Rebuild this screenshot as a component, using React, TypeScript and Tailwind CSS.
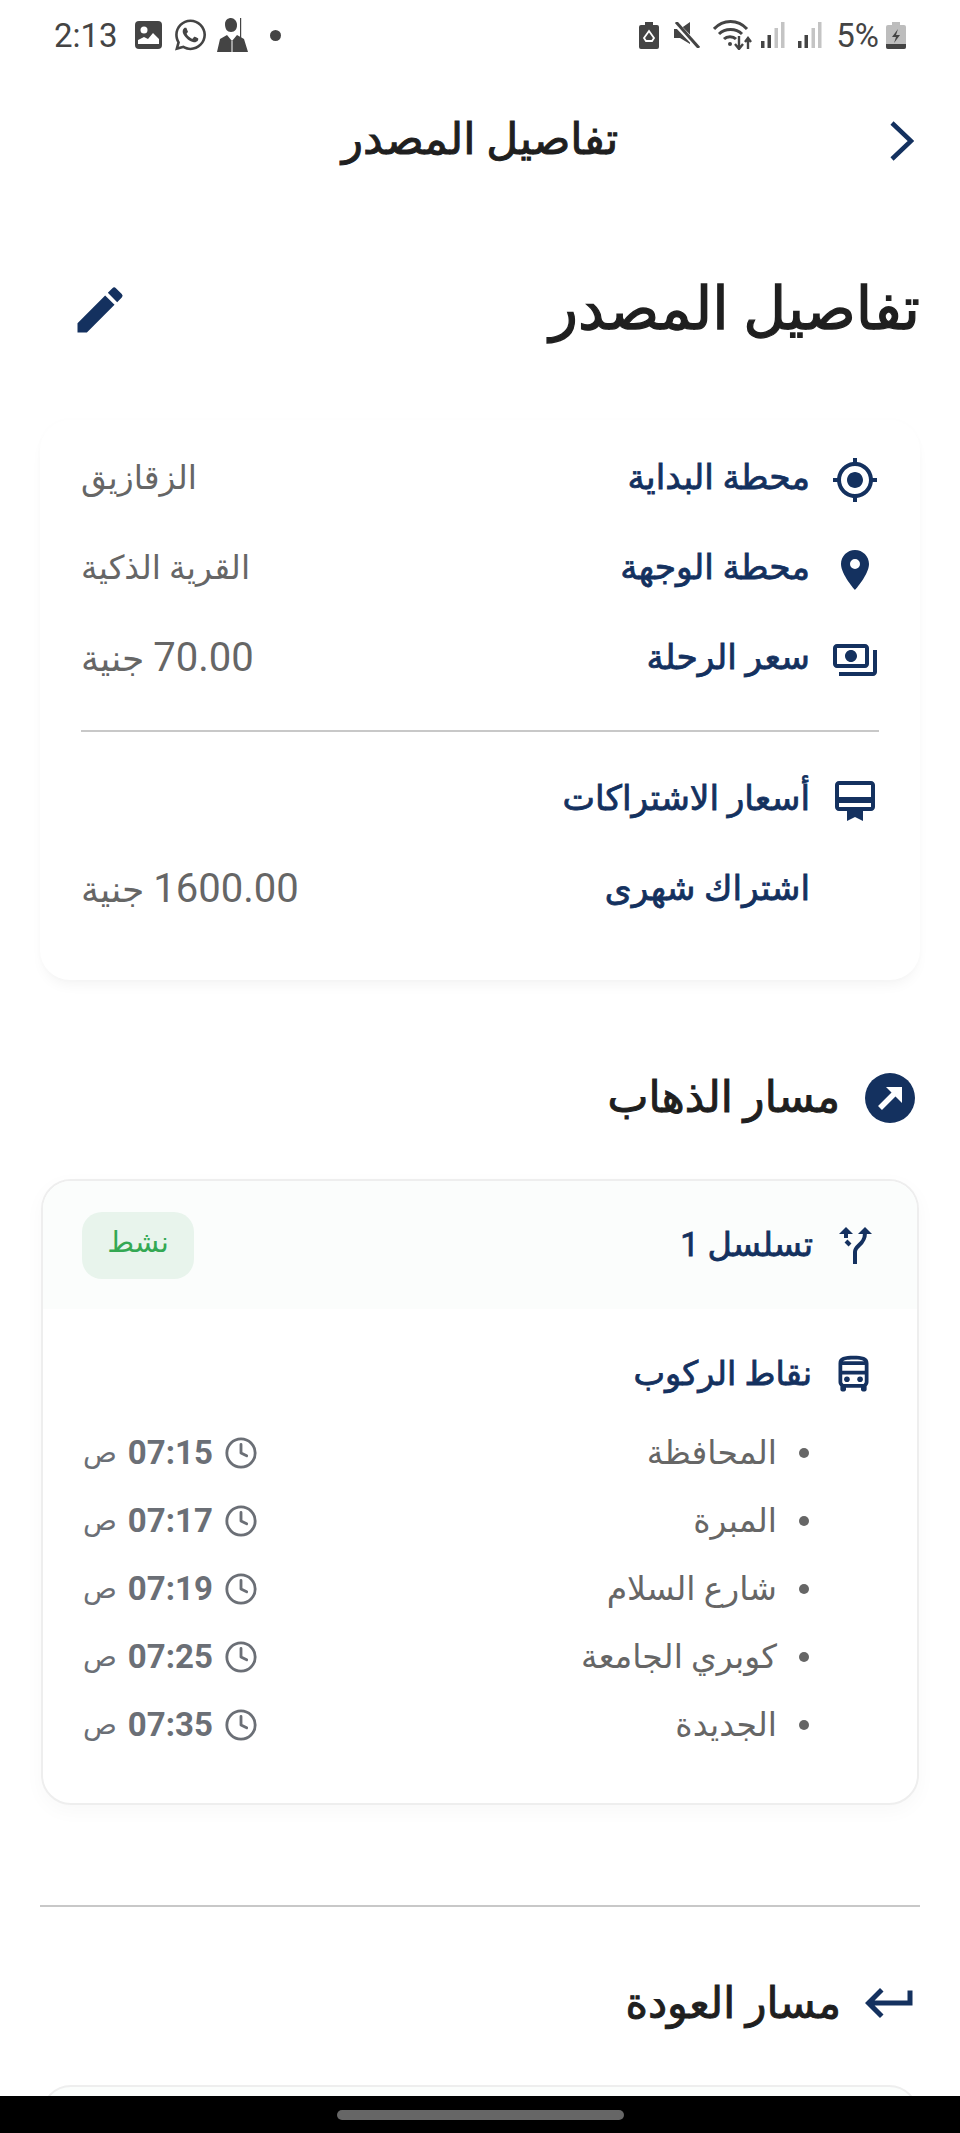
import React from "react";
import { Clock } from "lucide-react";
import { FaWhatsapp } from "react-icons/fa";
import {
  MdCardMembership,
  MdEdit,
  MdGpsFixed,
  MdKeyboardReturn,
  MdLocationOn,
  MdOutlineDirectionsBus,
  MdOutlinePayments,
} from "react-icons/md";

const stops = [
  { name: "المحافظة", time: "07:15" },
  { name: "المبرة", time: "07:17" },
  { name: "شارع السلام", time: "07:19" },
  { name: "كوبري الجامعة", time: "07:25" },
  { name: "الجديدة", time: "07:35" },
];

const BatteryShape = ({ fill }: { fill: string }) => (
  <path d="M6 0h8v3h4a2 2 0 0 1 2 2v20a2 2 0 0 1-2 2H2a2 2 0 0 1-2-2V5a2 2 0 0 1 2-2h4z" fill={fill} />
);

const Signal = () => (
  <svg width="24" height="26" viewBox="0 0 24 26">
    <rect x="0" y="19" width="3.5" height="7" fill="#444" />
    <rect x="6.5" y="13" width="3.5" height="13" fill="#444" />
    <rect x="13.5" y="6" width="3.5" height="20" fill="#c4c4c4" />
    <rect x="20" y="0" width="3.5" height="26" fill="#c4c4c4" />
  </svg>
);

const Money = ({ amount }: { amount: string }) => (
  <span className="text-[36px]">
    <span className="text-[40px] tracking-[1px]">{amount}</span> جنية
  </span>
);

const InfoRow = ({ icon, label, value }: { icon?: React.ReactNode; label: string; value?: React.ReactNode }) => (
  <div className="flex h-[90px] items-center justify-between">
    <div className="flex items-center gap-[21px]">
      <div className="flex w-[48px] justify-center">{icon}</div>
      <span className="mb-[4px] text-[34.5px] text-[#14315f] [-webkit-text-stroke:0.8px_#14315f]">{label}</span>
    </div>
    <span className="mb-[4px] text-[33px] text-[#666]">{value}</span>
  </div>
);

export default function App() {
  return (
    <div
      dir="rtl"
      className="relative flex h-[2133px] w-[960px] flex-col overflow-hidden bg-white font-['Roboto','DejaVu_Sans',sans-serif]"
    >
      {/* status bar */}
      <div dir="ltr" className="flex h-[70px] shrink-0 items-center justify-between pl-[54px] pr-[54px] text-[#444]">
        <div className="flex items-center">
          <span className="text-[33px] leading-none">2:13</span>
          <svg className="ml-[17px]" width="27" height="28" viewBox="0 0 27 28">
            <rect width="27" height="28" rx="4" fill="#444" />
            <circle cx="9" cy="9" r="3.5" fill="#fff" />
            <path d="M3 23v-4l6-3 4 2 5-6 6 6v5z" fill="#fff" />
          </svg>
          <FaWhatsapp className="ml-[13px] h-[36px] w-[31px]" />
          <svg className="ml-[11px]" width="31" height="34" viewBox="0 0 31 34" fill="#444">
            <path d="M8 6c0-4 3-6 6-6s6 3 6 7-2 7-6 7-6-3-6-8z" />
            <path d="M0 34l3-13 7-4 5 6 5-6 7 4 4 13z" />
            <rect x="23" y="0" width="1.2" height="20" />
            <path d="M15 23v11" stroke="#fff" strokeWidth="1" />
          </svg>
          <span className="ml-[22px] h-[11px] w-[11px] rounded-full bg-[#444]" />
        </div>
        <div className="flex items-center">
          <svg width="20" height="27" viewBox="0 0 20 27">
            <BatteryShape fill="#444" />
            <path d="M10 9l5 7-2 3H7l-2-3z" fill="none" stroke="#fff" strokeWidth="1.8" />
          </svg>
          <svg className="ml-[15px]" width="26" height="26" viewBox="0 0 26 26" fill="#444">
            <path d="M0 7h6l10-7v22l-10-6H0z" />
            <path d="M0 0l25 26" stroke="#fff" strokeWidth="5.5" />
            <path d="M2 0l23 26" stroke="#444" strokeWidth="3" />
          </svg>
          <svg className="ml-[13px]" width="39" height="30" viewBox="0 0 39 30" fill="none" stroke="#444">
            <path d="M1 9c9-10 24-10 33 0M6 14c6-6 17-6 23 0M11 19c3-3 9-3 12 0" strokeWidth="3" />
            <circle cx="17" cy="24" r="2" fill="#444" stroke="none" />
            <path d="M26 16v12M22 24l4 5 4-5M35 29V18M32 22l3-4 3 4" strokeWidth="2.4" />
          </svg>
          <div className="ml-[9px]"><Signal /></div>
          <div className="ml-[13px]"><Signal /></div>
          <span className="ml-[14px] text-[33px] leading-none">5%</span>
          <svg className="ml-[7px]" width="20" height="27" viewBox="0 0 20 27">
            <BatteryShape fill="#bdbdbd" />
            <path d="M0 22h20v3a2 2 0 0 1-2 2H2a2 2 0 0 1-2-2z" fill="#444" />
            <path d="M12 7l-6 8h4l-2 6 6-8h-4z" fill="#444" />
          </svg>
        </div>
      </div>

      {/* app bar */}
      <div className="grid h-[142px] shrink-0 grid-cols-[1fr_auto_1fr] items-center px-[46px]">
        <svg width="24" height="40" viewBox="0 0 24 40" fill="none" stroke="#14315f" strokeWidth="4.5">
          <path d="M2 2l19 18L2 38" />
        </svg>
        <h2 className="mb-[4px] text-[44px] leading-none text-[#1f1f1f] [-webkit-text-stroke:1px_#1f1f1f]">تفاصيل المصدر</h2>
        <div />
      </div>

      {/* page title */}
      <div className="mt-[54px] flex h-[88px] shrink-0 items-center justify-between pl-[70px] pr-[40px]">
        <h1 className="mb-[4px] text-[59px] leading-none text-[#1f1f1f] [-webkit-text-stroke:1.3px_#1f1f1f]">تفاصيل المصدر</h1>
        <MdEdit className="h-[60px] w-[60px] text-[#14315f]" />
      </div>

      {/* source card */}
      <div className="mx-[40px] mt-[66px] h-[560px] shrink-0 rounded-[30px] bg-white px-[41px] pt-[15px] shadow-[0_8px_14px_-4px_rgba(0,0,0,0.05),0_0_6px_rgba(0,0,0,0.015)]">
        <InfoRow icon={<MdGpsFixed className="h-[48px] w-[48px] text-[#14315f]" />} label="محطة البداية" value="الزقازيق" />
        <InfoRow icon={<MdLocationOn className="h-[48px] w-[48px] text-[#14315f]" />} label="محطة الوجهة" value="القرية الذكية" />
        <InfoRow icon={<MdOutlinePayments className="h-[48px] w-[48px] text-[#14315f]" />} label="سعر الرحلة" value={<Money amount="70.00" />} />
        <div className="mt-[25px] h-[2px] bg-[#c8c8c8]" />
        <div className="mt-[24px]">
          <InfoRow icon={<MdCardMembership className="h-[48px] w-[48px] text-[#14315f]" />} label="أسعار الاشتراكات" />
        </div>
        <InfoRow label="اشتراك شهرى" value={<Money amount="1600.00" />} />
      </div>

      {/* outbound */}
      <div className="mt-[88px] flex shrink-0 items-center gap-[25px] pr-[45px]">
        <div className="flex h-[50px] w-[50px] items-center justify-center rounded-full bg-[#14315f]">
          <svg width="50" height="50" viewBox="0 0 50 50" fill="#fff">
            <path d="M15 35l17-17" stroke="#fff" strokeWidth="5.5" />
            <path d="M21 14h16v16z" />
          </svg>
        </div>
        <h3 className="text-[43.5px] leading-[60px] text-[#1f1f1f] [-webkit-text-stroke:1px_#1f1f1f]">مسار الذهاب</h3>
      </div>

      <div className="mx-[41px] mt-[51px] h-[626px] shrink-0 overflow-hidden rounded-[30px] border-2 border-[#eeeeee] bg-white shadow-[0_6px_20px_rgba(0,0,0,0.03)]">
        <div className="flex h-[128px] items-center justify-between bg-[#fbfdfc] pl-[39px] pr-[45px]">
          <div className="flex items-center gap-[26px]">
            <svg width="33" height="37" viewBox="0 0 33 37" fill="#14315f">
              <path d="M16 37V25C16 18 26 18 26 6" fill="none" stroke="#14315f" strokeWidth="4" />
              <path d="M26 0l7 7H19z" />
              <path d="M7 0l7 7H0z" />
              <rect x="5" y="7" width="4" height="4" />
              <path d="M7 14l4 4" stroke="#14315f" strokeWidth="4" />
            </svg>
            <span className="text-[33.5px] text-[#14315f] [-webkit-text-stroke:0.8px_#14315f]">تسلسل 1</span>
          </div>
          <span className="flex h-[67px] w-[112px] items-center justify-center rounded-[20px] bg-[#e8f4ec] pb-[4px] text-[29px] text-[#34a853]">
            نشط
          </span>
        </div>
        <div className="mt-[40px] flex h-[50px] items-center gap-[19px] pr-[41px]">
          <MdOutlineDirectionsBus className="h-[45px] w-[45px] text-[#14315f]" />
          <span className="text-[33.5px] text-[#14315f] [-webkit-text-stroke:0.8px_#14315f]">نقاط الركوب</span>
        </div>
        <div className="mt-[20px] flex flex-col pl-[40px] pr-[108px]">
          {stops.map((s) => (
            <div key={s.time} className="flex h-[68px] items-center justify-between">
              <div className="flex items-center gap-[22px]">
                <span className="h-[10px] w-[10px] rounded-full bg-[#666]" />
                <span className="text-[33px] text-[#666]">{s.name}</span>
              </div>
              <div className="flex items-center gap-[11px]">
                <Clock className="h-[34px] w-[34px] text-[#6b6f76]" />
                <span className="text-[33px] font-bold text-[#6b6f76]">{s.time}</span>
                <span className="text-[28px] text-[#6b6f76]">ص</span>
              </div>
            </div>
          ))}
        </div>
      </div>

      <div className="mx-[40px] mt-[100px] h-[2px] shrink-0 bg-[#c8c8c8]" />

      {/* return */}
      <div className="mt-[66px] flex shrink-0 items-center gap-[19px] pr-[40px]">
        <MdKeyboardReturn className="h-[60px] w-[60px] text-[#14315f]" />
        <h3 className="text-[43px] leading-[60px] text-[#1f1f1f] [-webkit-text-stroke:1px_#1f1f1f]">مسار العودة</h3>
      </div>
      <div className="mx-[41px] mt-[52px] h-[60px] shrink-0 rounded-t-[30px] border-2 border-[#eeeeee] bg-[#fbfdfc]" />

      {/* nav bar */}
      <div className="absolute bottom-0 left-0 right-0 flex h-[37px] justify-center bg-black pt-[14px]">
        <div className="h-[10px] w-[287px] rounded-full bg-[#666]" />
      </div>
    </div>
  );
}
